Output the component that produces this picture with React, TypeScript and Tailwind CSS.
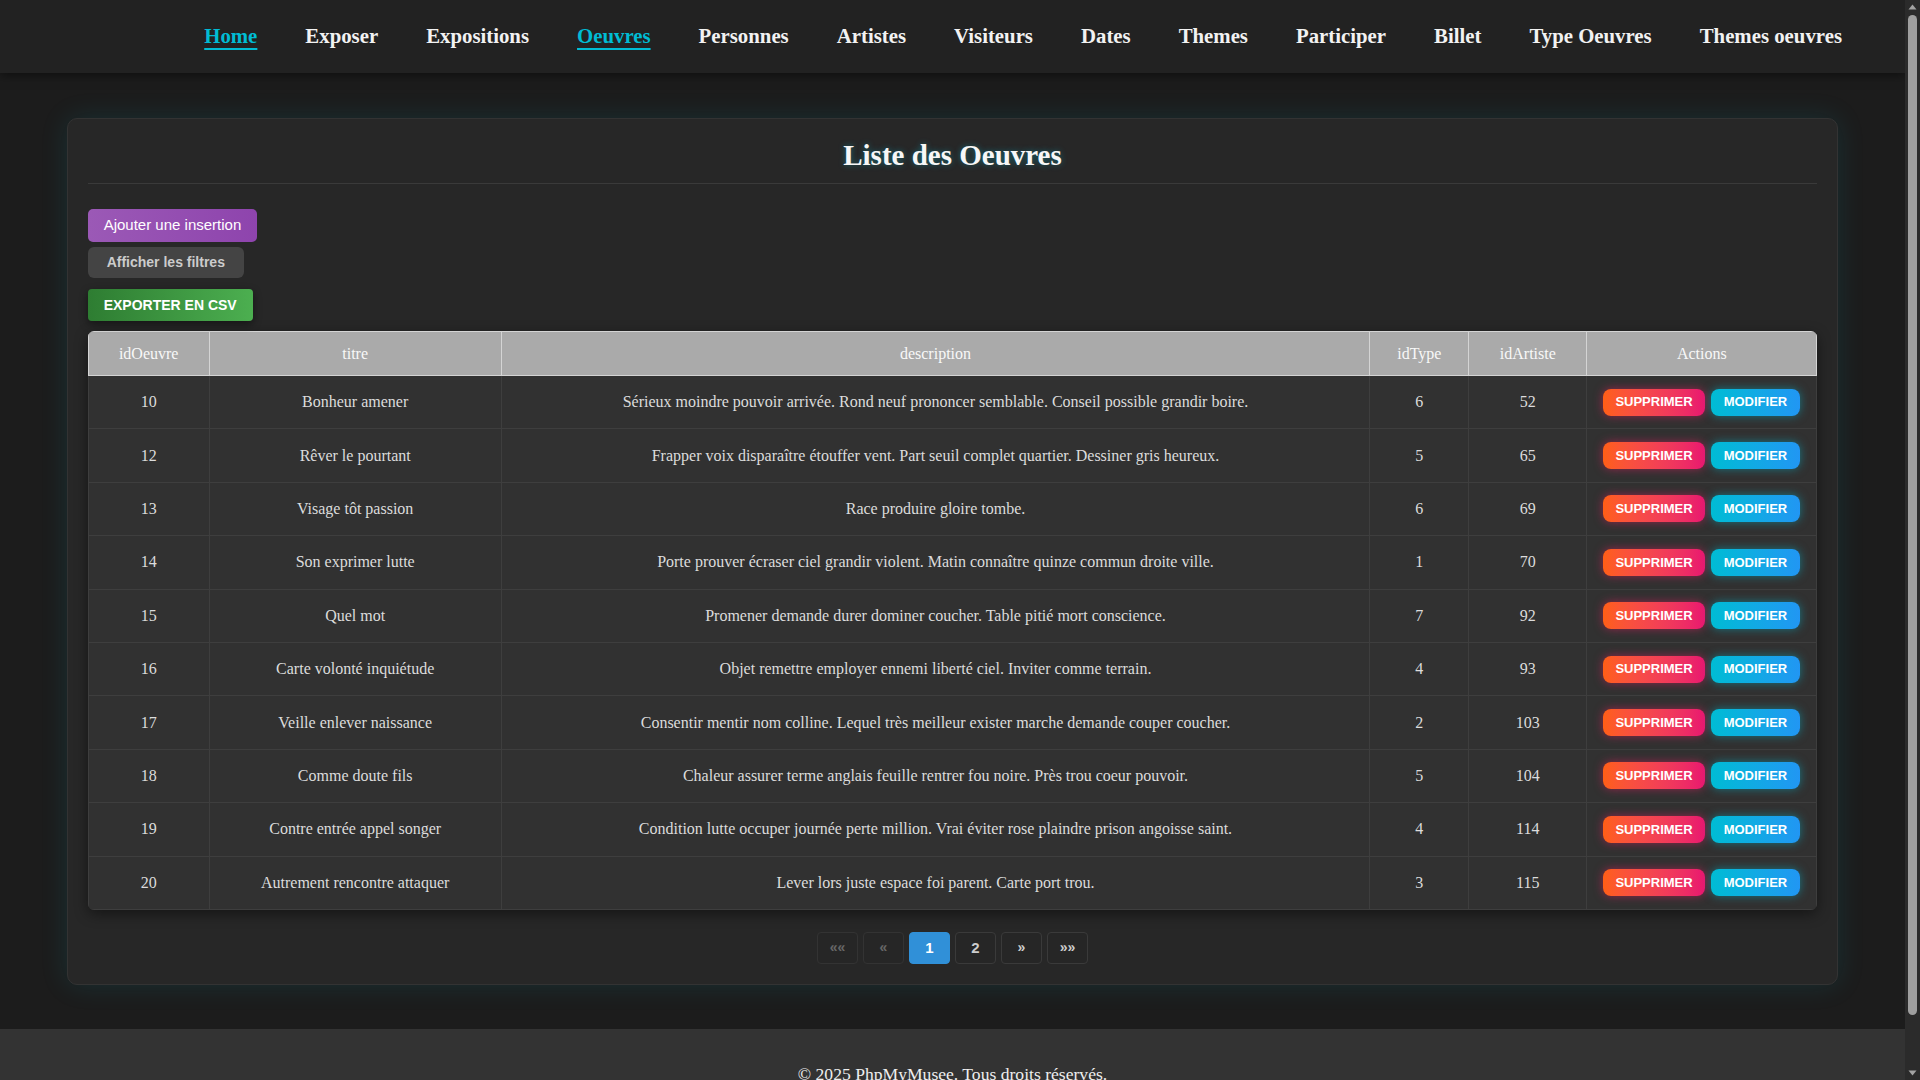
import React from "react";

const navItems = [
  { label: "Home", active: true },
  { label: "Exposer" },
  { label: "Expositions" },
  { label: "Oeuvres", active: true },
  { label: "Personnes" },
  { label: "Artistes" },
  { label: "Visiteurs" },
  { label: "Dates" },
  { label: "Themes" },
  { label: "Participer" },
  { label: "Billet" },
  { label: "Type Oeuvres" },
  { label: "Themes oeuvres" },
];

const rows = [
  [10, "Bonheur amener", "Sérieux moindre pouvoir arrivée. Rond neuf prononcer semblable. Conseil possible grandir boire.", 6, 52],
  [12, "Rêver le pourtant", "Frapper voix disparaître étouffer vent. Part seuil complet quartier. Dessiner gris heureux.", 5, 65],
  [13, "Visage tôt passion", "Race produire gloire tombe.", 6, 69],
  [14, "Son exprimer lutte", "Porte prouver écraser ciel grandir violent. Matin connaître quinze commun droite ville.", 1, 70],
  [15, "Quel mot", "Promener demande durer dominer coucher. Table pitié mort conscience.", 7, 92],
  [16, "Carte volonté inquiétude", "Objet remettre employer ennemi liberté ciel. Inviter comme terrain.", 4, 93],
  [17, "Veille enlever naissance", "Consentir mentir nom colline. Lequel très meilleur exister marche demande couper coucher.", 2, 103],
  [18, "Comme doute fils", "Chaleur assurer terme anglais feuille rentrer fou noire. Près trou coeur pouvoir.", 5, 104],
  [19, "Contre entrée appel songer", "Condition lutte occuper journée perte million. Vrai éviter rose plaindre prison angoisse saint.", 4, 114],
  [20, "Autrement rencontre attaquer", "Lever lors juste espace foi parent. Carte port trou.", 3, 115],
] as const;

const serif = "font-['Liberation_Serif','Times_New_Roman',serif]";
const sans = "font-['Liberation_Sans',Arial,sans-serif]";

function Scrollbar() {
  return (
    <div className="flex h-screen w-[15px] shrink-0 flex-col items-center bg-[#2b2b2b]">
      <svg width="9" height="6" viewBox="0 0 9 6" className="mt-[4px]">
        <path d="M4.5 0.5 L8.5 5.5 L0.5 5.5 Z" fill="#a3a3a3" />
      </svg>
      <div className="mt-[5px] h-[1000px] w-[9px] rounded-full bg-[#9f9f9f]" />
      <div className="flex-1" />
      <svg width="9" height="6" viewBox="0 0 9 6" className="mb-[4px]">
        <path d="M0.5 0.5 L8.5 0.5 L4.5 5.5 Z" fill="#a3a3a3" />
      </svg>
    </div>
  );
}

export default function App() {
  return (
    <div className="flex h-screen overflow-hidden">
      <div className={`min-w-0 flex-1 overflow-hidden bg-[#1c1c1c] ${serif}`}>
        <nav className="relative z-10 flex h-[73px] items-center justify-end gap-[48px] bg-[#222222] pr-[63px] shadow-[0_2px_10px_rgba(0,0,0,0.5)]">
          {navItems.map((n) => (
            <a
              key={n.label}
              href="#"
              className={`text-[20.8px] font-bold leading-none ${
                n.active
                  ? "text-[#00bcd4] underline decoration-[#00bcd4] decoration-2 underline-offset-[5px]"
                  : "text-[#f2f2f2] no-underline"
              }`}
            >
              {n.label}
            </a>
          ))}
        </nav>

        <main className="mx-auto mt-[45px] w-[93%] rounded-[10px] border border-[#333333] bg-[#272727] px-[20px] pb-[20px] pt-[19px] shadow-[0_0_28px_rgba(0,188,212,0.13)]">
          <div className="border-b border-[#3a3a3a] pb-[10px]">
            <h2 className="text-center text-[29px] font-bold leading-[35px] text-[#f7f7f7] [text-shadow:0_0_6px_rgba(0,188,212,0.45)]">
              Liste des Oeuvres
            </h2>
          </div>

          <div className={`mt-[25px] flex flex-col items-start ${sans}`}>
            <button className="h-[33px] rounded-[5px] bg-linear-to-r from-[#9b59b6] to-[#8e44ad] px-[16px] text-[15px] text-white">
              Ajouter une insertion
            </button>
            <button className="mt-[5px] h-[31px] rounded-[6px] bg-[#444444] px-[19px] text-[14px] font-bold text-[#cccccc]">
              Afficher les filtres
            </button>
            <button className="mt-[11px] h-[32px] rounded-[4px] bg-linear-to-r from-[#2e7d32] to-[#4caf50] px-[16px] text-[14px] font-bold text-white shadow-[0_3px_8px_rgba(0,0,0,0.45)]">
              EXPORTER EN CSV
            </button>
          </div>

          <div className="mt-[10px] overflow-hidden rounded-[6px] shadow-[0_4px_14px_rgba(0,0,0,0.45)]">
            <table className="w-full table-fixed border-collapse text-[16px]">
              <thead>
                <tr className="h-[44px] bg-[#aaaaaa] text-[#f8f8f8]">
                  <th className="w-[121px] border border-[#d4d4d4] font-normal">idOeuvre</th>
                  <th className="w-[292px] border border-[#d4d4d4] font-normal">titre</th>
                  <th className="border border-[#d4d4d4] font-normal">description</th>
                  <th className="w-[99px] border border-[#d4d4d4] font-normal">idType</th>
                  <th className="w-[118px] border border-[#d4d4d4] font-normal">idArtiste</th>
                  <th className="w-[230px] border border-[#d4d4d4] font-normal">Actions</th>
                </tr>
              </thead>
              <tbody>
                {rows.map((r) => (
                  <tr key={r[0]} className="h-[53.4px] bg-[#313131] text-center text-[#dcdcdc]">
                    <td className="border border-[#3e3e3e]">{r[0]}</td>
                    <td className="border border-[#3e3e3e]">{r[1]}</td>
                    <td className="border border-[#3e3e3e]">{r[2]}</td>
                    <td className="border border-[#3e3e3e]">{r[3]}</td>
                    <td className="border border-[#3e3e3e]">{r[4]}</td>
                    <td className="border border-[#3e3e3e]">
                      <div className={`flex items-center justify-center gap-[6px] ${sans}`}>
                        <button className="h-[27px] rounded-[8px] bg-linear-to-r from-[#ff5e14] to-[#e9156f] px-[12px] text-[13px] font-bold text-white shadow-[0_0_10px_rgba(233,30,99,0.55)]">
                          SUPPRIMER
                        </button>
                        <button className="h-[27px] rounded-[8px] bg-linear-to-r from-[#00bcd4] to-[#2196f3] px-[13px] text-[13px] font-bold text-white shadow-[0_0_10px_rgba(0,188,212,0.5)]">
                          MODIFIER
                        </button>
                      </div>
                    </td>
                  </tr>
                ))}
              </tbody>
            </table>
          </div>

          <div className={`mt-[22px] flex justify-center gap-[5px] ${sans}`}>
            <span className="flex h-[32px] w-[41px] items-center justify-center rounded-[4px] border border-[#333333] bg-[#262626] text-[14px] font-bold text-[#666666]">
              ««
            </span>
            <span className="flex h-[32px] w-[41px] items-center justify-center rounded-[4px] border border-[#333333] bg-[#262626] text-[14px] font-bold text-[#666666]">
              «
            </span>
            <span className="flex h-[32px] w-[41px] items-center justify-center rounded-[4px] border border-[#3090d8] bg-[#3090d8] text-[15px] font-bold text-white">
              1
            </span>
            <span className="flex h-[32px] w-[41px] items-center justify-center rounded-[4px] border border-[#3a3a3a] bg-[#262626] text-[15px] font-bold text-[#cccccc]">
              2
            </span>
            <span className="flex h-[32px] w-[41px] items-center justify-center rounded-[4px] border border-[#3a3a3a] bg-[#262626] text-[14px] font-bold text-[#cccccc]">
              »
            </span>
            <span className="flex h-[32px] w-[41px] items-center justify-center rounded-[4px] border border-[#3a3a3a] bg-[#262626] text-[14px] font-bold text-[#cccccc]">
              »»
            </span>
          </div>
        </main>

        <footer className="mt-[44px] bg-[#333333] pb-[32px] pt-[32px] text-center text-[17.6px] text-[#eeeeee]">
          © 2025 PhpMyMusee. Tous droits réservés.
        </footer>
      </div>
      <Scrollbar />
    </div>
  );
}
